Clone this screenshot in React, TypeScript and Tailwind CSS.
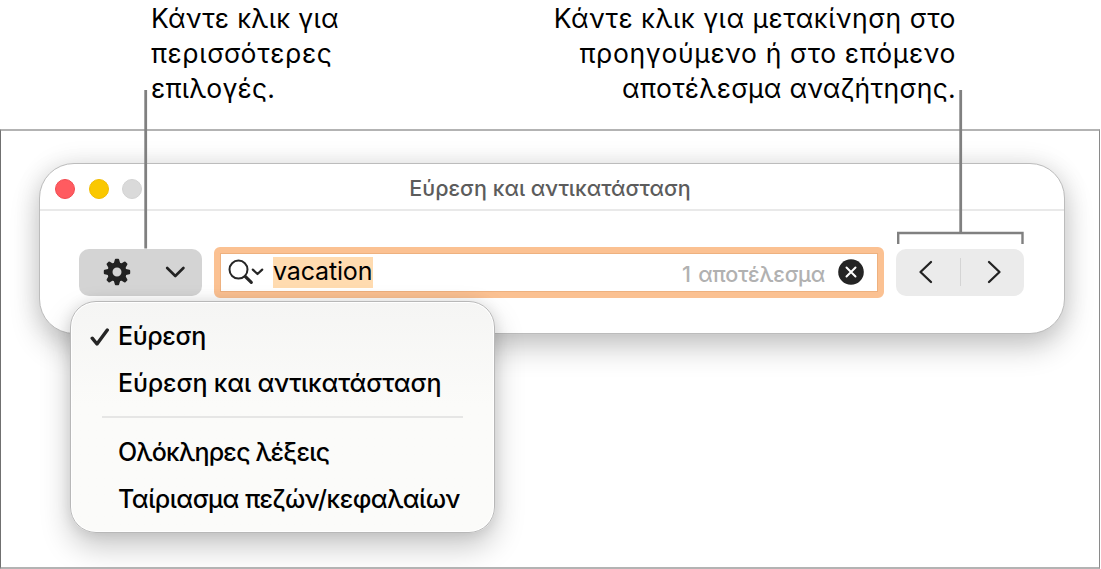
import type { ReactNode } from "react";

const findModes = [
  { label: "Εύρεση", checked: true, tracking: "tracking-[-0.4px]" },
  { label: "Εύρεση και αντικατάσταση", checked: false, tracking: "tracking-[-0.17px]" },
];

const searchOptions = [
  { label: "Ολόκληρες λέξεις", tracking: "tracking-[-0.8px]" },
  { label: "Ταίριασμα πεζών/κεφαλαίων", tracking: "tracking-[-0.53px]" },
];

function GearIcon() {
  return (
    <svg width="28" height="28" viewBox="-14 -14 28 28" fill="#222">
      {[0, 45, 90, 135].map((angle) => (
        <path
          key={angle}
          transform={`rotate(${angle})`}
          d="M-3.1 -9 L-2.2 -12.3 Q-2 -13.2 -1.2 -13.2 H1.2 Q2 -13.2 2.2 -12.3 L3.1 -9 V9 L2.2 12.3 Q2 13.2 1.2 13.2 H-1.2 Q-2 13.2 -2.2 12.3 L-3.1 9 V5.5 H3.1 V-5.5 H-3.1 Z"
        />
      ))}
      <circle r="7.1" fill="none" stroke="#222" strokeWidth="5.2" />
    </svg>
  );
}

function SearchIcon() {
  return (
    <svg width="36" height="26" viewBox="0 0 36 26" fill="none" stroke="#262626" strokeLinecap="round" strokeLinejoin="round">
      <circle cx="10.5" cy="10.6" r="9" strokeWidth="2" />
      <path d="M17.4 17.6 L23.3 23.4" strokeWidth="3.2" />
      <path d="M24.8 10.6 L29.5 15 L34.2 10.6" strokeWidth="2.2" />
    </svg>
  );
}

function ClearIcon() {
  return (
    <svg width="26" height="26" viewBox="0 0 26 26">
      <circle cx="13" cy="13" r="12.8" fill="#242424" />
      <path d="M8.5 8.5 L17.5 17.5 M17.5 8.5 L8.5 17.5" stroke="#fff" strokeWidth="2" strokeLinecap="round" />
    </svg>
  );
}

function MenuItem({ checked, tracking, children }: { checked?: boolean; tracking: string; children: ReactNode }) {
  return (
    <li className="flex h-[47px] items-center">
      <span className="flex w-[47px] shrink-0 justify-end pr-2">
        {checked && (
          <svg width="20" height="20" viewBox="0 0 20 20" fill="none" stroke="#262626" strokeWidth="3.4" strokeLinecap="round" strokeLinejoin="round">
            <path d="M2.2 11.2 L7 17 L17.3 3" />
          </svg>
        )}
      </span>
      <span className={`text-[25px] font-[450] whitespace-nowrap text-black ${tracking}`}>{children}</span>
    </li>
  );
}

function OptionsMenu() {
  return (
    <div className="absolute top-[170px] left-[69px] h-[232px] w-[425px] rounded-[26px] border border-[#b8b8b8] bg-linear-to-b from-[#f5f5f4] to-[#fbfbf9] to-45% pt-[11px] shadow-[0_14px_30px_rgba(0,0,0,0.22),0_0_14px_rgba(0,0,0,0.10),inset_0_0_0_1px_#fff]">
      <ul>
        {findModes.map((mode) => (
          <MenuItem key={mode.label} checked={mode.checked} tracking={mode.tracking}>
            {mode.label}
          </MenuItem>
        ))}
      </ul>
      <hr className="mt-[9px] mr-[31px] mb-[11px] ml-[31px] border-t-2 border-[#e6e6e5]" />
      <ul>
        {searchOptions.map((option) => (
          <MenuItem key={option.label} tracking={option.tracking}>
            {option.label}
          </MenuItem>
        ))}
      </ul>
    </div>
  );
}

function FindWindow() {
  return (
    <div className="h-[171px] w-[1026px] rounded-[35px] border border-[#bcbcbc] bg-white shadow-[0_14px_30px_rgba(0,0,0,0.20),0_0_26px_rgba(0,0,0,0.10)]">
      <div className="grid h-[47px] grid-cols-[1fr_auto_1fr] items-center border-b-2 border-[#e9e9e9]">
        <div className="flex gap-[13.5px] pt-[5px] pl-[15px]">
          <span className="size-5 rounded-full border border-[#f24a50] bg-[#ff5b60]" />
          <span className="size-5 rounded-full border border-[#f2bd00] bg-[#fac800]" />
          <span className="size-5 rounded-full border border-[#d3d3d3] bg-[#dadada]" />
        </div>
        <h1 className="pt-[3px] pr-[4px] text-[21.5px] font-[550] whitespace-nowrap text-[#5c5c5c]">
          Εύρεση και αντικατάσταση
        </h1>
        <div />
      </div>

      <div className="flex items-center pt-[36px] pl-[39px]">
        <button className="flex h-[47px] w-[123px] items-center rounded-[10px] bg-[#d4d4d4] pb-px pl-[24px]">
          <GearIcon />
          <svg className="ml-[34px]" width="20" height="14" viewBox="0 0 20 14" fill="none" stroke="#222" strokeWidth="2.6" strokeLinecap="round" strokeLinejoin="round">
            <path d="M2.2 3 L10.3 11 L18.4 3" />
          </svg>
        </button>

        <div className="ml-[12px] flex h-[51px] w-[670px] items-center rounded-[6px] border-[6px] border-[#fbc192] bg-white pr-[14px] pb-px pl-[8px] shadow-[inset_0_0_0_1px_#eeb17f]">
          <SearchIcon />
          <span className="ml-[9px] flex h-[31px] w-[100px] items-center bg-[#ffdbb0] pb-px text-[25px] tracking-[-0.15px] text-black">
            vacation
          </span>
          <span className="ml-auto pt-[4px] pr-[13px] text-[21.5px] font-[550] tracking-[-0.25px] text-[#b1b1b1] [word-spacing:2px]">
            1 αποτέλεσμα
          </span>
          <ClearIcon />
        </div>

        <div className="ml-[12px] flex h-[47px] w-[128px] items-center justify-between rounded-[10px] bg-[#ebebeb] px-[22px] pb-px">
          <svg width="16" height="24" viewBox="0 0 16 24" fill="none" stroke="#222" strokeWidth="2.3" strokeLinecap="round" strokeLinejoin="round">
            <path d="M13 2 L2.5 12 L13 22" />
          </svg>
          <span className="h-[28px] w-px bg-[#d4d4d4]" />
          <svg width="16" height="24" viewBox="0 0 16 24" fill="none" stroke="#222" strokeWidth="2.3" strokeLinecap="round" strokeLinejoin="round">
            <path d="M3 2 L13.5 12 L3 22" />
          </svg>
        </div>
      </div>
    </div>
  );
}

// Leader lines from the captions down to the controls they describe
function LeaderLines() {
  return (
    <svg className="pointer-events-none absolute inset-0" width="1101" height="569" viewBox="0 0 1101 569" fill="none" stroke="#808080">
      <path d="M145.7 90 V248.5" strokeWidth="2.8" />
      <path d="M960.7 90 V233" strokeWidth="2.8" />
      <path d="M898.2 244 V233 H1022.5 V244" strokeWidth="2.4" />
    </svg>
  );
}

export default function App() {
  return (
    <div className="relative h-[569px] w-[1101px] overflow-hidden bg-white font-['Inter','Noto_Sans',sans-serif]">
      <div className="flex h-[129px] justify-between pt-[1px] pr-[145px] pl-[151px] text-[26.5px] leading-[35px] text-black">
        <p>
          <span className="tracking-[0.3px]">Κάντε κλικ για</span>
          <br />
          <span className="tracking-[0.65px]">περισσότερες</span>
          <br />
          <span className="tracking-[0.2px]">επιλογές.</span>
        </p>
        <p className="text-right">
          <span className="tracking-[0.5px]">Κάντε κλικ για μετακίνηση στο</span>
          <br />
          <span className="tracking-[0.65px]">προηγούμενο ή στο επόμενο</span>
          <br />
          <span className="tracking-[0.3px]">αποτέλεσμα αναζήτησης.</span>
        </p>
      </div>

      <div className="relative h-[440px] w-[1100px] overflow-hidden border-x border-y-2 border-t-[#b3b3b3] border-r-[#8a8a8a] border-b-[#b3b3b3] border-l-[#707070] pt-[32px] pl-[38px]">
        <FindWindow />
        <OptionsMenu />
      </div>

      <LeaderLines />
    </div>
  );
}
